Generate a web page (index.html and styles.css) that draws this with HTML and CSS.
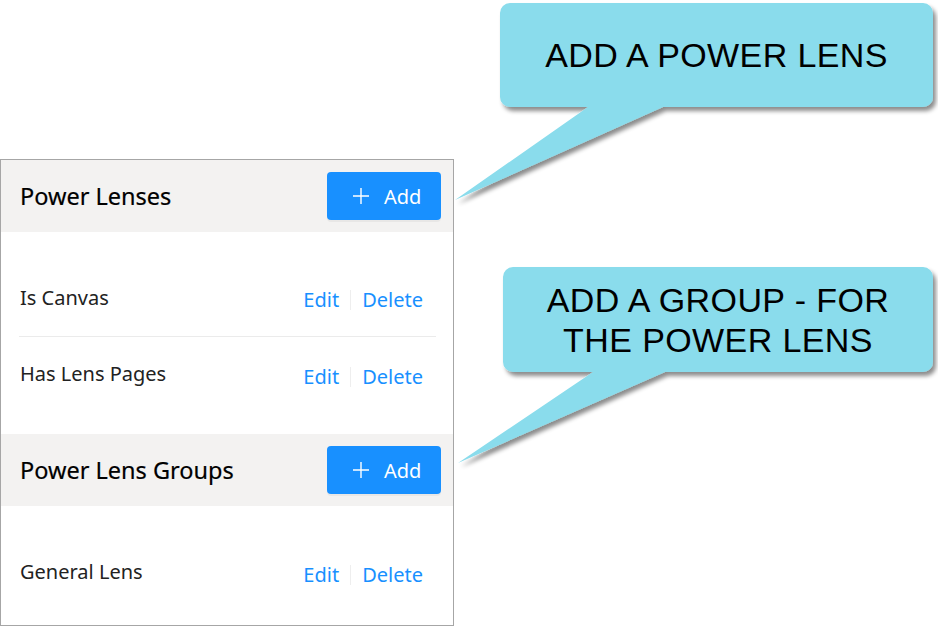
FILE: index.html
```html
<!DOCTYPE html>
<html lang="en">
<head>
<meta charset="utf-8">
<title>Power Lenses</title>
<link rel="stylesheet" href="styles.css">
</head>
<body>
<div class="page">
  <div class="panel">
    <section class="section">
      <div class="section-head">
        <h2 class="section-title">Power Lenses</h2>
        <button class="add-btn" type="button">
          <svg class="plus" width="16" height="16" viewBox="0 0 16 16"><path d="M8 0V16M0 8H16" stroke="#fff" stroke-width="1.4" fill="none"/></svg>
          <span>Add</span>
        </button>
      </div>
      <ul class="list">
        <li class="item">
          <span class="item-title">Is Canvas</span>
          <ul class="actions"><li><a>Edit</a></li><li><a>Delete</a></li></ul>
        </li>
        <li class="item">
          <span class="item-title">Has Lens Pages</span>
          <ul class="actions"><li><a>Edit</a></li><li><a>Delete</a></li></ul>
        </li>
      </ul>
    </section>
    <section class="section">
      <div class="section-head">
        <h2 class="section-title">Power Lens Groups</h2>
        <button class="add-btn" type="button">
          <svg class="plus" width="16" height="16" viewBox="0 0 16 16"><path d="M8 0V16M0 8H16" stroke="#fff" stroke-width="1.4" fill="none"/></svg>
          <span>Add</span>
        </button>
      </div>
      <ul class="list list-last">
        <li class="item">
          <span class="item-title">General Lens</span>
          <ul class="actions"><li><a>Edit</a></li><li><a>Delete</a></li></ul>
        </li>
      </ul>
    </section>
  </div>

  <svg class="callout-shapes" width="938" height="626" viewBox="0 0 938 626">
    <defs>
      <filter id="sh" x="-10%" y="-10%" width="130%" height="130%">
        <feDropShadow dx="3" dy="4" stdDeviation="2.2" flood-color="#000" flood-opacity="0.45"/>
      </filter>
    </defs>
    <path filter="url(#sh)" fill="#8adcec" d="M510,3 H923 A10,10 0 0 1 933,13 V97 A10,10 0 0 1 923,107 H663 L455,200 L588,107 H510 A10,10 0 0 1 500,97 V13 A10,10 0 0 1 510,3 Z"/>
    <path filter="url(#sh)" fill="#8adcec" d="M513,267 H923 A10,10 0 0 1 933,277 V362 A10,10 0 0 1 923,372 H665 L458,463 L593,372 H513 A10,10 0 0 1 503,362 V277 A10,10 0 0 1 513,267 Z"/>
  </svg>
  <div class="callout-text callout-one">ADD A POWER LENS</div>
  <div class="callout-text callout-two">ADD A GROUP - FOR<br>THE POWER LENS</div>
</div>
</body>
</html>
```
FILE: styles.css
```css
html, body {
  margin: 0;
  padding: 0;
  background: #ffffff;
}

body {
  font-family: "Noto Sans", "Open Sans", "DejaVu Sans", sans-serif;
}

.page {
  position: relative;
  width: 938px;
  height: 626px;
  padding-top: 159px;
  box-sizing: border-box;
  overflow: hidden;
}

.panel {
  width: 454px;
  border: 1px solid #a6a6a6;
  box-sizing: border-box;
  background: #ffffff;
}

.section-head {
  height: 72px;
  background: #f3f2f1;
  display: flex;
  align-items: center;
  justify-content: space-between;
  padding: 0 12px 0 19px;
}

.section-title {
  margin: 0;
  font-size: 23.5px;
  font-weight: 400;
  color: #000000;
  line-height: 1.3;
  -webkit-text-stroke: 0.2px #000;
}

.add-btn {
  display: flex;
  align-items: center;
  gap: 15px;
  width: 114px;
  height: 48px;
  padding: 0 0 0 26px;
  border: none;
  border-radius: 4px;
  background: #1890ff;
  color: #ffffff;
  font-family: inherit;
  font-size: 20px;
  box-shadow: 0 2px 0 rgba(0, 0, 0, 0.045);
  box-sizing: border-box;
}

.plus {
  display: block;
  flex: none;
}

.list {
  list-style: none;
  margin: 0;
  padding: 29px 17px 21px 18px;
}

.list-last {
  padding-bottom: 14px;
}

.item {
  display: flex;
  align-items: center;
  justify-content: space-between;
  height: 76px;
  box-sizing: border-box;
  border-bottom: 1px solid #ebebeb;
  padding: 0 13px 0 1px;
}

.item:last-child {
  border-bottom: none;
}

.item-title {
  font-size: 20px;
  color: #222222;
  margin-bottom: 3px;
}

.actions {
  display: flex;
  list-style: none;
  margin: 3px 0 0 0;
  padding: 0;
}

.actions li {
  font-size: 20px;
  line-height: 20px;
  padding: 0 11px;
  color: #1890ff;
}

.actions li + li {
  border-left: 1px solid #eeeeee;
  padding-right: 0;
}

.callout-shapes {
  position: absolute;
  left: 0;
  top: 0;
  pointer-events: none;
}

.callout-text {
  position: absolute;
  font-family: "Liberation Sans", Arial, sans-serif;
  font-size: 34px;
  line-height: 40px;
  letter-spacing: 0.4px;
  color: #000000;
  text-align: center;
}

.callout-one {
  left: 500px;
  top: 35px;
  width: 433px;
}

.callout-two {
  left: 503px;
  top: 280px;
  width: 430px;
}
```
